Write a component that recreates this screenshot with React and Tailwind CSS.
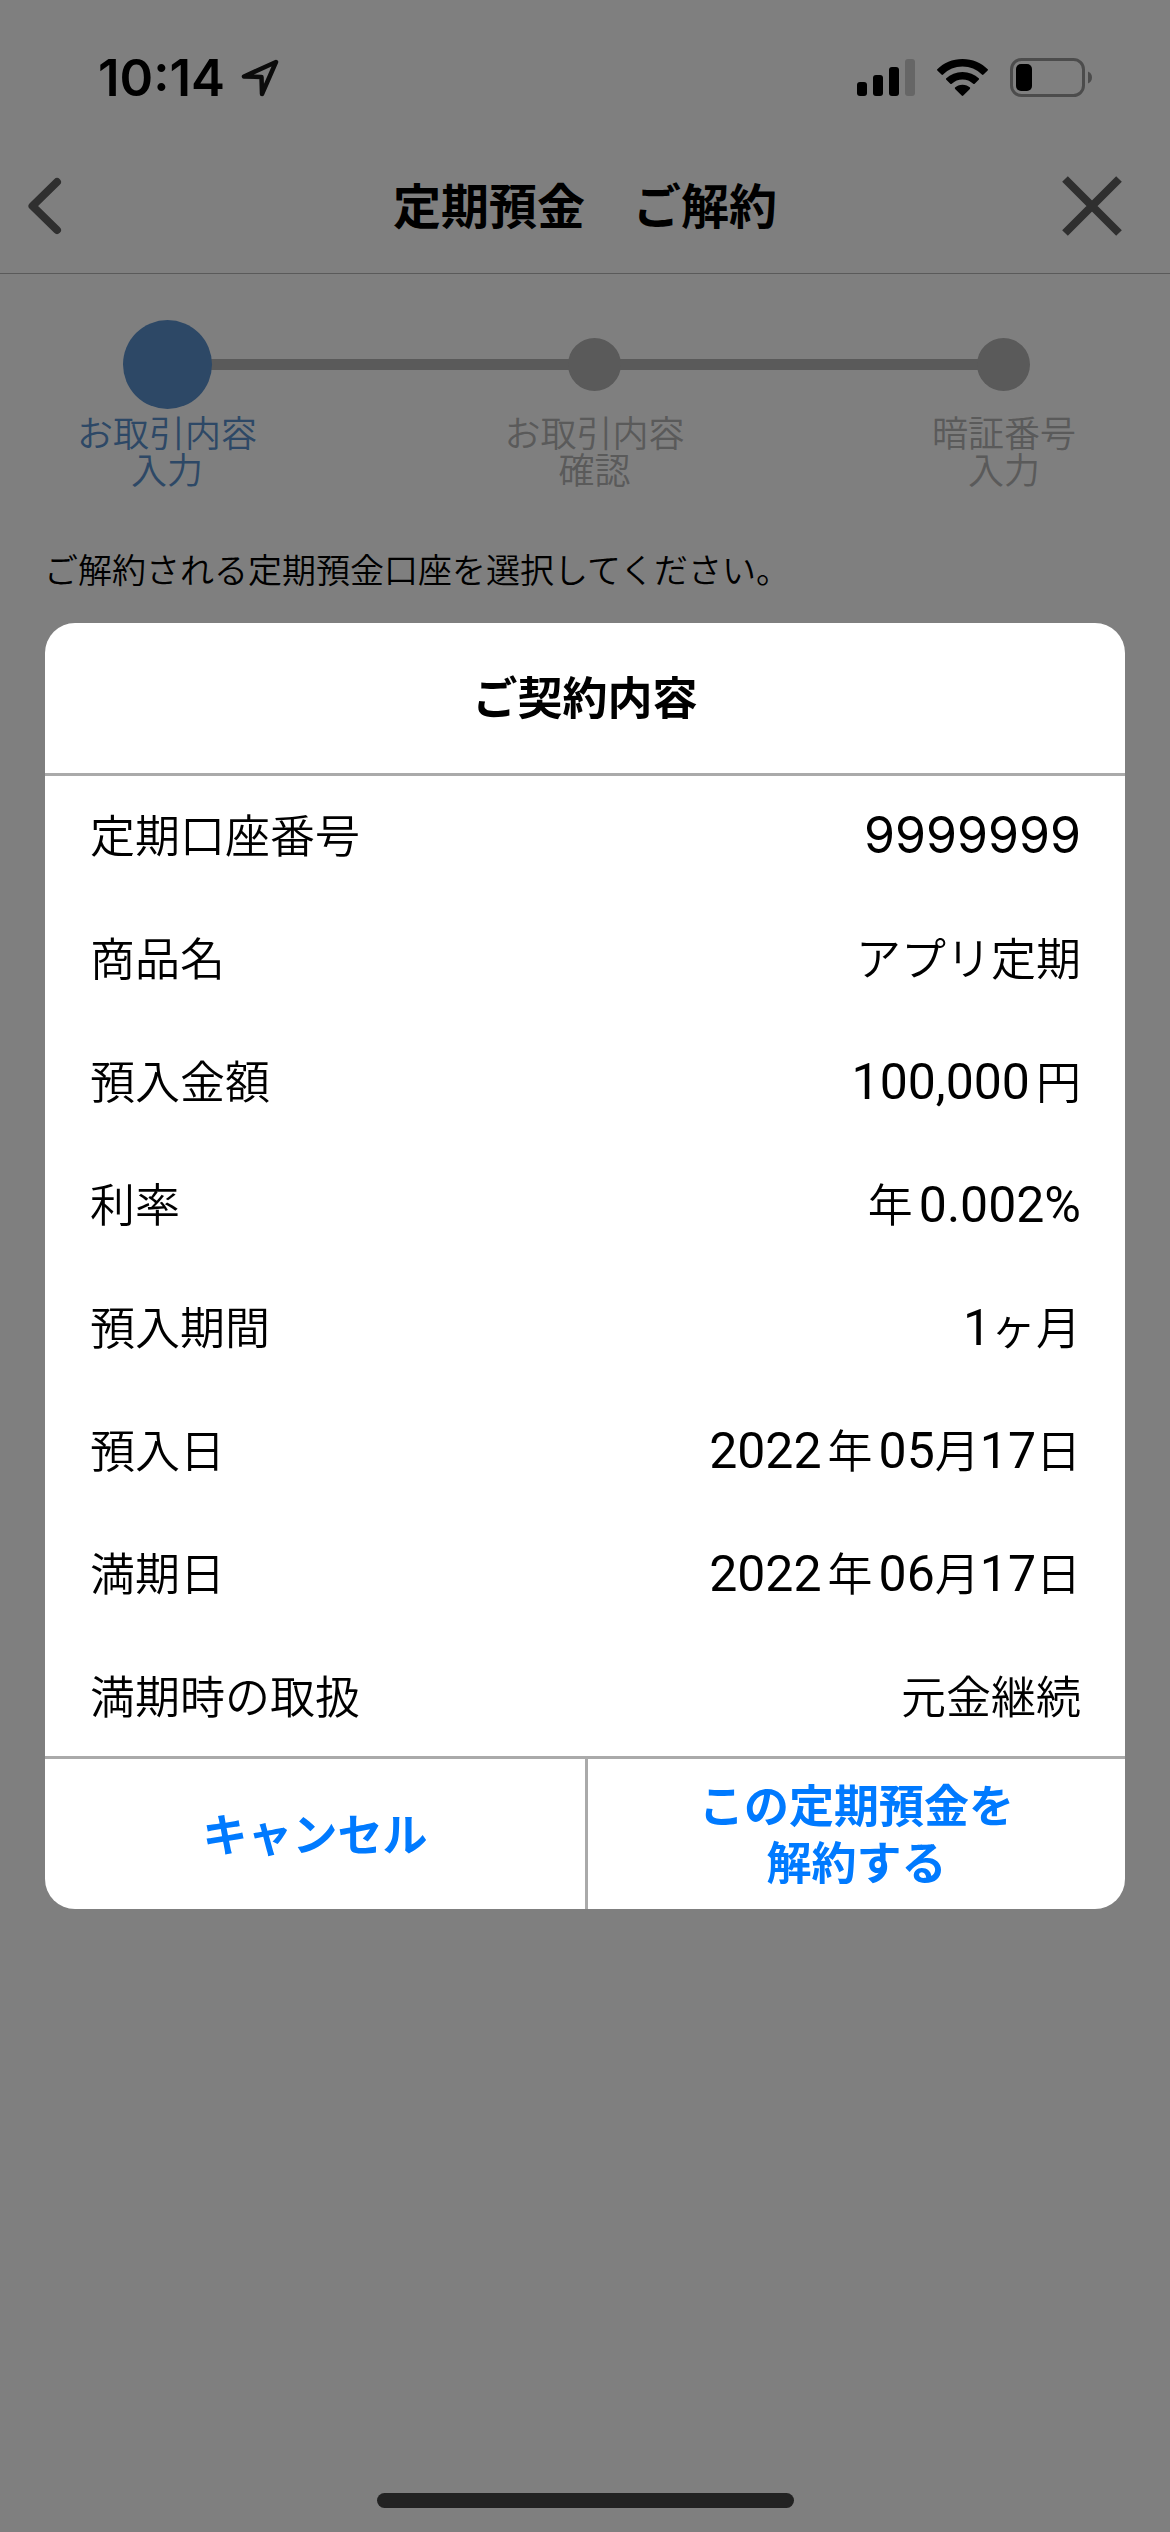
import { useState } from "react";

const steps = [
  { lines: ["お取引内容", "入力"], active: true },
  { lines: ["お取引内容", "確認"], active: false },
  { lines: ["暗証番号", "入力"], active: false },
];

// Each value is a list of parts, digits are set in their own typeface
const rows = [
  { label: "定期口座番号", value: [{ wide: "9999999" }] },
  { label: "商品名", value: [{ text: "アプリ定期" }] },
  { label: "預入金額", value: [{ num: "100,000" }, { gap: true }, { text: "円" }] },
  { label: "利率", value: [{ text: "年" }, { gap: true }, { num: "0.002%" }] },
  { label: "預入期間", value: [{ num: "1" }, { text: "ヶ月" }] },
  {
    label: "預入日",
    value: [
      { num: "2022" }, { gap: true }, { text: "年" }, { gap: true },
      { num: "05" }, { text: "月" }, { num: "17" }, { text: "日" },
    ],
  },
  {
    label: "満期日",
    value: [
      { num: "2022" }, { gap: true }, { text: "年" }, { gap: true },
      { num: "06" }, { text: "月" }, { num: "17" }, { text: "日" },
    ],
  },
  { label: "満期時の取扱", value: [{ text: "元金継続" }] },
];

const StatusBar = () => (
  <div className="flex justify-between items-center pt-12 pb-8 pl-[98px] pr-[77px]">
    <div className="flex items-center gap-4">
      <span className="font-['Inter',sans-serif] font-semibold text-[51px] leading-[60px]">10:14</span>
      <svg width="38" height="38" viewBox="0 0 38 38" fill="none" stroke="#181818" strokeWidth="4.5" strokeLinejoin="round">
        <path d="M35 3 L3 17.500 L20.500 18 L21 35 Z" />
      </svg>
    </div>

    <div className="flex items-center gap-[22px]">
      <svg width="58" height="38" viewBox="0 0 58 38">
        <rect x="0" y="23" width="10" height="14" rx="3" />
        <rect x="16" y="16" width="10" height="21" rx="3" />
        <rect x="32" y="8" width="10" height="29" rx="3" />
        <rect x="48" y="0" width="10" height="37" rx="3" fillOpacity="0.2" />
      </svg>
      <svg width="51" height="38" viewBox="0 0 51 38">
        <path d="M25.500 0 C35.500 0 44.500 4 51 10.500 C51 11 50.800 11.400 50.400 11.800 L46.500 15.600 C46 16.100 45.400 16.100 44.900 15.600 C39.700 10.500 33 7.600 25.500 7.600 C18 7.600 11.300 10.500 6.100 15.600 C5.600 16.100 5 16.100 4.500 15.600 L0.600 11.800 C0.200 11.400 0 11 0 10.500 C6.500 4 15.500 0 25.500 0 Z" />
        <path d="M25.500 13 C32 13 37.500 15.300 42 19.500 C42.200 20 42.100 20.400 41.700 20.800 L37.700 24.700 C37.300 25.100 36.700 25.100 36.200 24.700 C33.200 22.100 29.700 20.500 25.500 20.500 C21.300 20.500 17.800 22.100 14.800 24.700 C14.300 25.100 13.700 25.100 13.300 24.700 L9.300 20.800 C8.900 20.400 8.800 20 9 19.500 C13.500 15.300 19 13 25.500 13 Z" />
        <path d="M25.500 25.700 C28.600 25.700 31.200 26.800 33 28.600 C33.300 29 33.300 29.400 32.900 29.900 L26.300 36.500 C25.800 37 25.200 37 24.700 36.500 L18.100 29.900 C17.700 29.400 17.700 29 18 28.600 C19.800 26.800 22.400 25.700 25.500 25.700 Z" />
      </svg>
      <svg width="83" height="40" viewBox="0 0 83 40">
        <rect x="1.500" y="1.500" width="72" height="36" rx="10" fill="none" stroke="#000" strokeOpacity="0.4" strokeWidth="3" />
        <rect x="6" y="6" width="16" height="27" rx="5" />
        <path d="M78 13.500 C80.500 14.500 82 16.800 82 19.500 C82 22.200 80.500 24.500 78 25.500 Z" fillOpacity="0.4" />
      </svg>
    </div>
  </div>
);

const Header = () => (
  <header className="flex justify-between items-center pt-[34px] pb-[35px] px-7 border-b border-[#b4b4b4]">
    <button type="button" aria-label="戻る" className="w-[80px] h-16 flex items-center">
      <svg width="34" height="58" viewBox="0 0 34 58" fill="none" stroke="#5e5e5e" strokeWidth="8" strokeLinecap="round" strokeLinejoin="round">
        <path d="M29 5 L4.500 29 L29 53" />
      </svg>
    </button>
    <h1 className="pb-1.5 text-[48px] leading-[58px] font-bold whitespace-pre">定期預金　ご解約</h1>
    <button type="button" aria-label="閉じる" className="w-[80px] h-16 flex items-center justify-start">
      <svg width="60" height="60" viewBox="0 0 60 60" fill="none" stroke="#5e5e5e" strokeWidth="8">
        <path d="M3 3 L57 57 M57 3 L3 57" />
      </svg>
    </button>
  </header>
);

const Stepper = () => (
  <div className="relative pt-[46px]">
    <div className="absolute top-[85px] left-[167px] right-[166px] h-[11px] bg-[#b4b4b4]" />
    <ol className="relative flex justify-between pl-[77px] pr-[94px]">
      {steps.map((step, index) => (
        <li
          key={index}
          className={`flex flex-col items-center text-[36px] leading-[37px] ${
            step.active ? "text-[#5a90cc]" : "text-[#b4b4b4]"
          }`}
        >
          <span className="h-[89px] flex items-center">
            <span
              className={`rounded-full ${
                step.active ? "w-[89px] h-[89px] bg-[#5a90cc]" : "w-[53px] h-[53px] bg-[#b4b4b4]"
              }`}
            />
          </span>
          <span className="mt-1 text-center font-[350]">
            {step.lines[0]}
            <br />
            {step.lines[1]}
          </span>
        </li>
      ))}
    </ol>
  </div>
);

const ValuePart = ({ part }) => {
  if (part.gap) return <span className="w-1.5" />;
  if (part.num) return <span className="font-['Roboto',sans-serif] font-normal text-[50px]">{part.num}</span>;
  if (part.wide) return <span className="font-['Inter',sans-serif] font-normal text-[50px]">{part.wide}</span>;
  return <span>{part.text}</span>;
};

const ContractDialog = ({ onClose }) => (
  <div className="fixed inset-0 bg-black/50 flex items-center justify-center px-[45px]">
    <div role="dialog" aria-modal="true" aria-labelledby="dialog-title" className="w-full bg-white rounded-[30px] overflow-hidden">
      <h2 id="dialog-title" className="pt-[43px] pb-[47px] text-center text-[45px] leading-[60px] font-bold border-b-3 border-[#aaaaaa]">
        ご契約内容
      </h2>

      <dl className="flex flex-col gap-[63px] pt-7 pb-[31px] pl-[45px] pr-11 text-[45px] leading-[60px] font-[350]">
        {rows.map((row) => (
          <div key={row.label} className="flex justify-between items-baseline h-[60px]">
            <dt>{row.label}</dt>
            <dd className="flex items-baseline">
              {row.value.map((part, index) => (
                <ValuePart key={index} part={part} />
              ))}
            </dd>
          </div>
        ))}
      </dl>

      <div className="grid grid-cols-2 border-t-3 border-[#aaaaaa] text-[45px] leading-[57px] font-bold text-[#007aff]">
        <button type="button" onClick={onClose} className="pt-4 pb-5">
          キャンセル
        </button>
        <button type="button" className="pt-4 pb-5 border-l-3 border-[#aaaaaa]">
          この定期預金を
          <br />
          解約する
        </button>
      </div>
    </div>
  </div>
);

const App = () => {
  const [open, setOpen] = useState(true);

  return (
    <div className="min-h-screen bg-white text-black flex flex-col font-['Noto_Sans_CJK_JP',sans-serif]">
      <StatusBar />
      <Header />
      <main className="flex-1">
        <Stepper />
        <p className="mt-[58px] px-11 text-[34px] leading-[48px] font-[350]">
          ご解約される定期預金口座を選択してください。
        </p>
      </main>
      <div className="w-[417px] h-[15px] mb-6 mx-auto rounded-full bg-[#444444]" />

      {open && <ContractDialog onClose={() => setOpen(false)} />}
    </div>
  );
};

export default App;
